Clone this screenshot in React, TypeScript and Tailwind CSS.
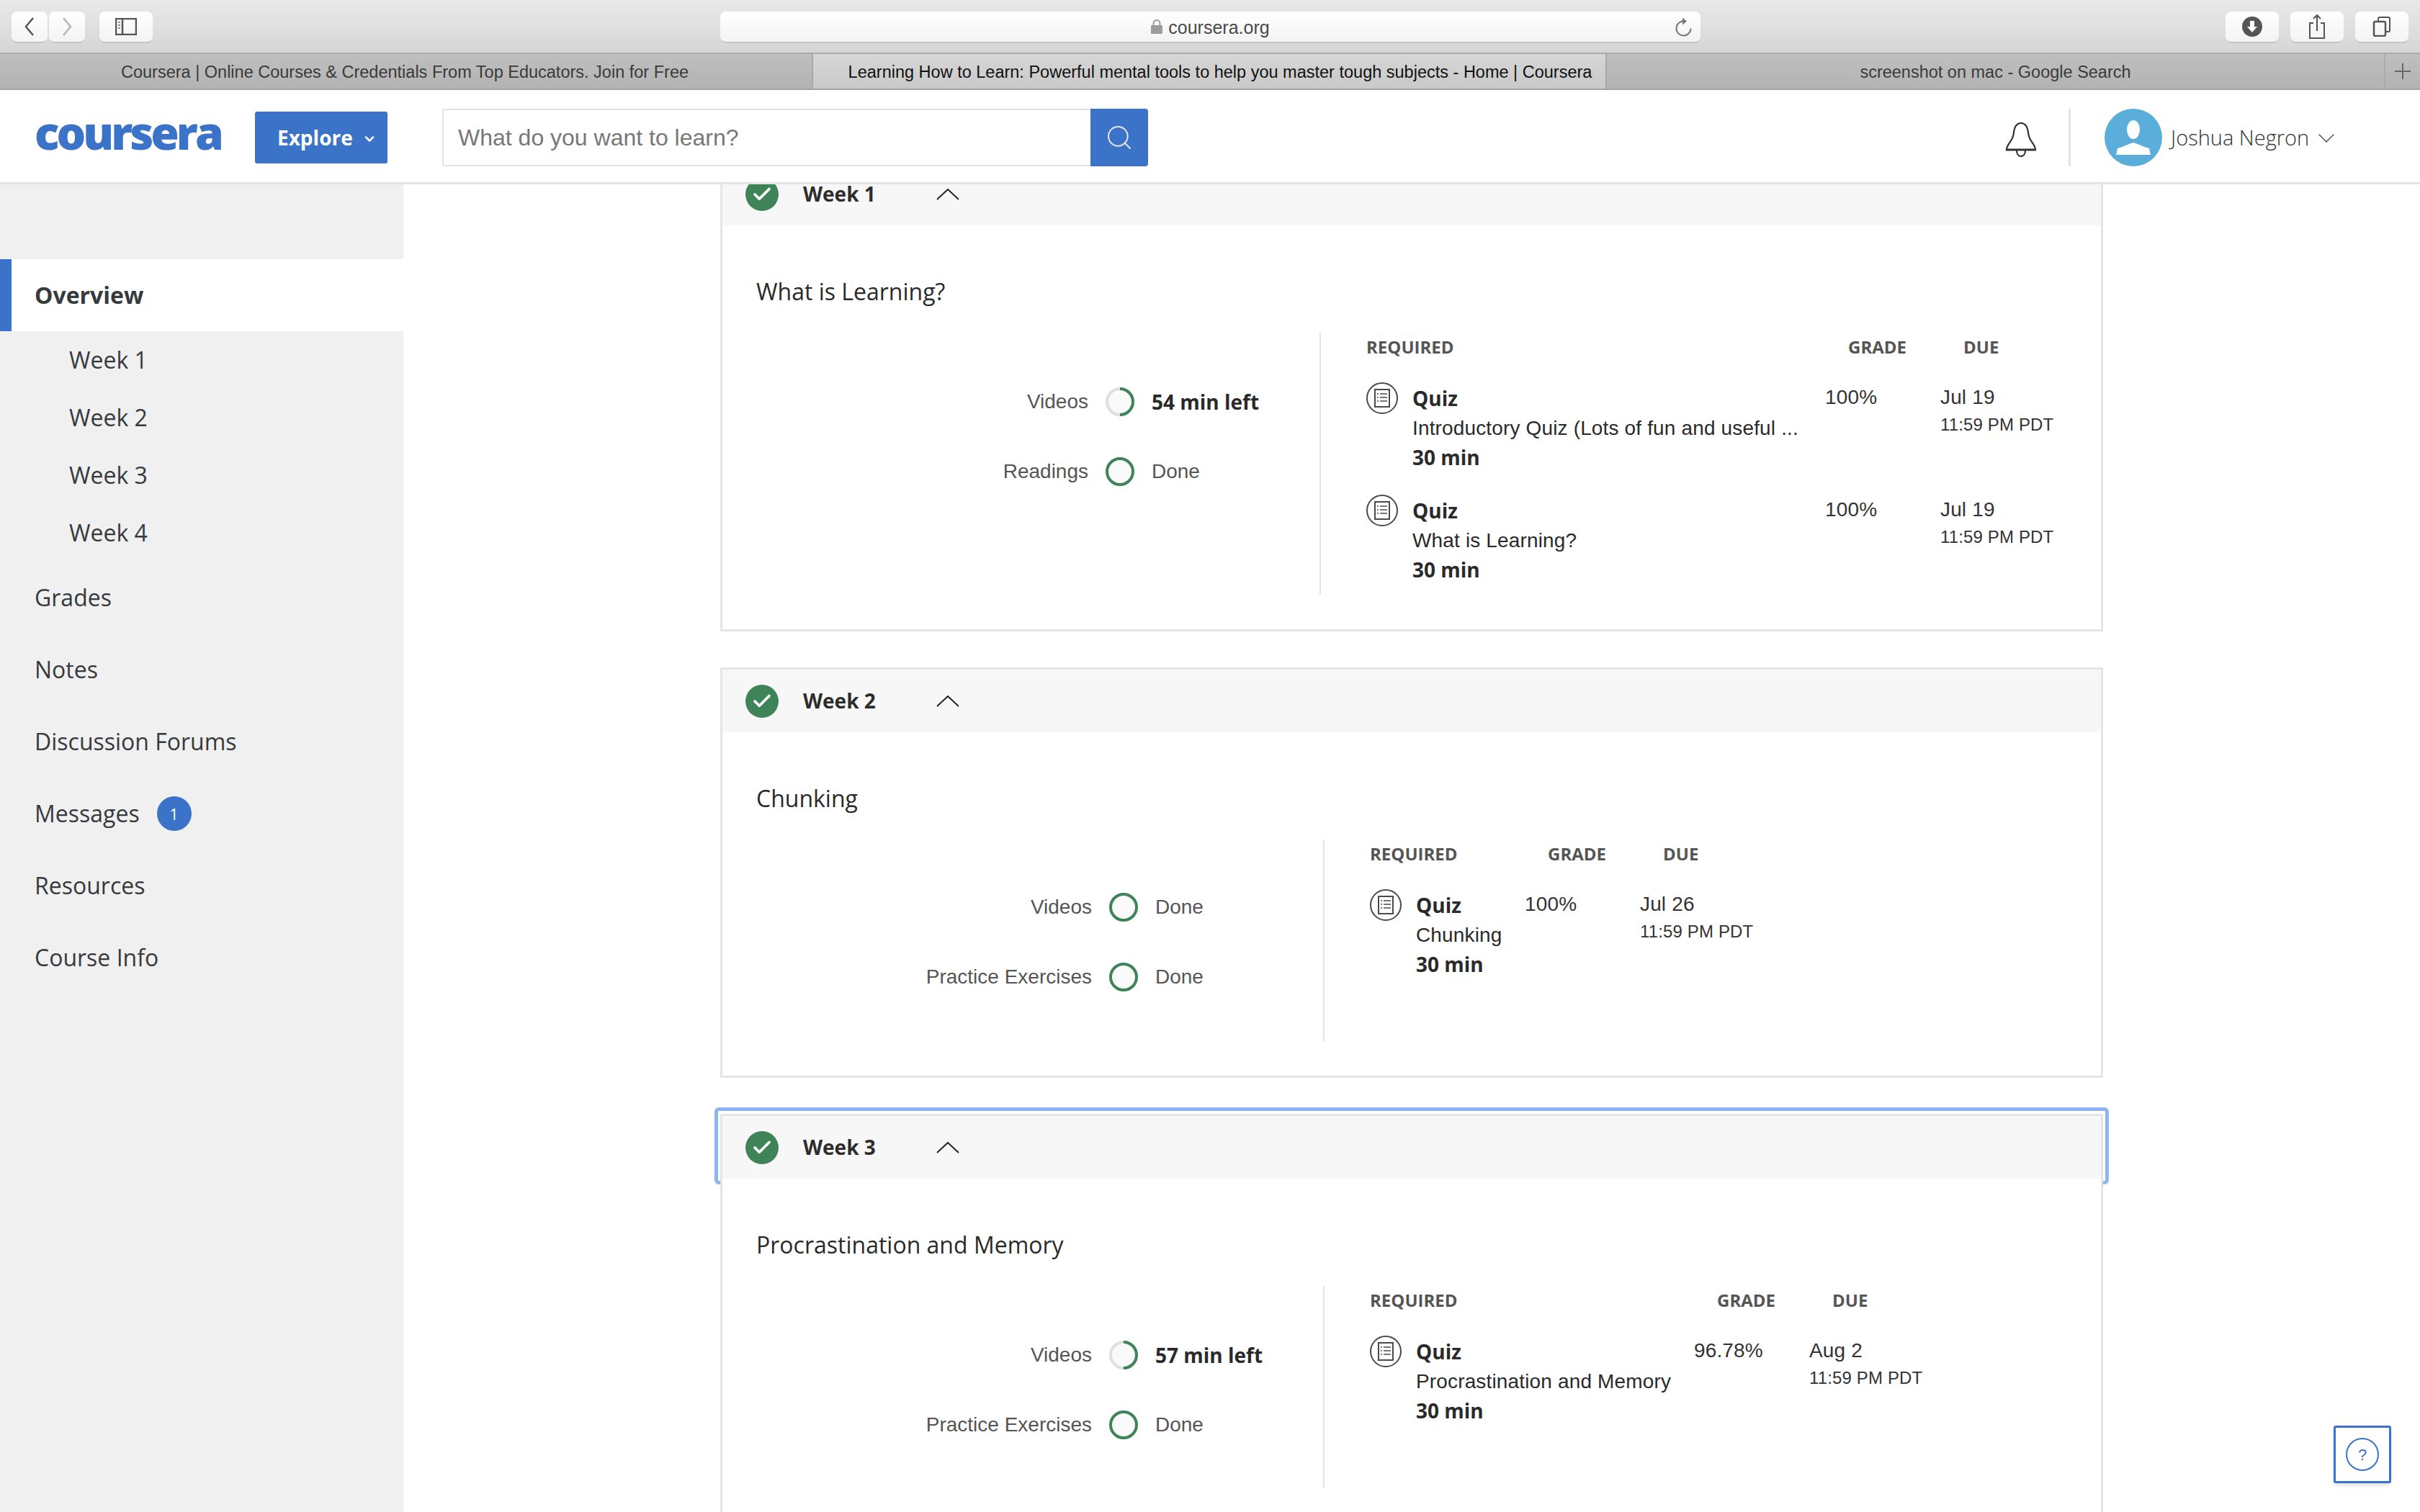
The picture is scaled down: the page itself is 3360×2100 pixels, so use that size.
import { Check, ChevronDown, Search } from 'lucide-react';

const openSans = 'font-["Open_Sans",sans-serif]';
const helvetica = 'font-["Liberation_Sans",Arial,sans-serif]';

type Quiz = { name: string; grade: string; date: string };
type Progress = { label: string; status: string; partial?: boolean };

const BrowserButton = ({ className, children }: { className: string; children: React.ReactNode }) => (
  <div className={`flex h-[44px] items-center justify-center rounded-[8px] border-b-2 border-[#c4c4c4] bg-gradient-to-b from-white to-[#f3f3f3] ${className}`}>
    {children}
  </div>
);

const BrowserBar = () => (
  <div className="flex h-[75px] items-start border-b-2 border-[#ababab] bg-gradient-to-b from-[#e9e9e9] to-[#d6d6d6] pt-[16px] pl-[16px] pr-[16px]">
    <BrowserButton className="w-[50px]">
      <svg width="16" height="26" viewBox="0 0 16 26" fill="none" stroke="#555" strokeWidth="2.5"><path d="M13 1 3 13l10 12" /></svg>
    </BrowserButton>
    <BrowserButton className="ml-[2px] w-[50px]">
      <svg width="16" height="26" viewBox="0 0 16 26" fill="none" stroke="#b5b5b5" strokeWidth="2.5"><path d="m3 1 10 12L3 25" /></svg>
    </BrowserButton>
    <BrowserButton className="ml-[20px] w-[74px]">
      <svg width="30" height="24" viewBox="0 0 30 24" fill="none" stroke="#555" strokeWidth="2.5">
        <rect x="1" y="1" width="28" height="22" />
        <path d="M10 1v22" />
        <path d="M4 6h3M4 10h3M4 14h3" strokeWidth="2" stroke="#888" />
      </svg>
    </BrowserButton>
    <BrowserButton className={`relative ml-[788px] w-[1361px] gap-[8px] pt-[2px] text-[25px] leading-none text-[#4a4a4a] ${helvetica}`}>
      <svg width="16" height="20" viewBox="0 0 16 20" className="mt-[-2px]">
        <path d="M3.5 9V5.5a4.5 4.5 0 0 1 9 0V9" fill="none" stroke="#9c9c9c" strokeWidth="2" />
        <rect y="8" width="16" height="12" rx="1" fill="#9c9c9c" />
      </svg>
      <span>coursera.org</span>
      <svg width="24" height="28" viewBox="0 0 24 28" fill="none" stroke="#777" strokeWidth="2" className="absolute right-[12px] top-[7px]">
        <path d="M14 6.5a10 10 0 1 0 8.5 10" />
        <path d="M11 1.5 17 6.5l-6 5z" fill="#777" stroke="none" />
      </svg>
    </BrowserButton>
    <BrowserButton className="ml-[729px] w-[74px]">
      <svg width="28" height="28" viewBox="0 0 28 28">
        <circle cx="14" cy="14" r="14" fill="#555" />
        <path d="M11 6h6v8h4l-7 8-7-8h4z" fill="#fff" />
      </svg>
    </BrowserButton>
    <BrowserButton className="ml-[16px] w-[74px]">
      <svg width="24" height="34" viewBox="0 0 24 34" fill="none" stroke="#555" strokeWidth="2">
        <path d="M7 12H2v21h20V12h-5" />
        <path d="M12 23V1M7 6l5-5 5 5" />
      </svg>
    </BrowserButton>
    <BrowserButton className="ml-[16px] w-[74px]">
      <svg width="26" height="28" viewBox="0 0 26 28" fill="none" stroke="#555" strokeWidth="2.5">
        <rect x="2" y="7" width="16" height="20" rx="2" />
        <path d="M8 7V3a2 2 0 0 1 2-2h12a2 2 0 0 1 2 2v16a2 2 0 0 1-2 2h-4" strokeWidth="2" />
      </svg>
    </BrowserButton>
  </div>
);

const TabBar = () => (
  <div className={`flex h-[50px] border-b-2 border-[#a3a3a3] bg-gradient-to-b from-[#bfbfbf] to-[#b3b3b3] text-[23.5px] ${helvetica}`}>
    <div className="flex w-[1127px] items-center justify-center pt-[4px] pr-[3px] text-[#3a3a3a]">
      Coursera | Online Courses &amp; Credentials From Top Educators. Join for Free
    </div>
    <div className="flex w-[1104px] items-center justify-center border-x-2 border-[#a8a8a8] bg-gradient-to-b from-[#d6d6d6] to-[#c9c9c9] pt-[4px] pl-[30px] text-[#111]">
      Learning How to Learn: Powerful mental tools to help you master tough subjects - Home | Coursera
    </div>
    <div className="flex w-[1079px] items-center justify-center pt-[4px] text-[#3a3a3a]">screenshot on mac - Google Search</div>
    <div className="flex w-[50px] items-center justify-center border-l-2 border-[#ababab]">
      <svg width="24" height="24" viewBox="0 0 24 24" stroke="#666" strokeWidth="2"><path d="M12 1v22M1 12h22" /></svg>
    </div>
  </div>
);

const SiteHeader = () => (
  <header className="flex h-[131px] shrink-0 items-center border-b-[3px] border-[#e4e4e4] bg-white pt-[4px]">
    <div className={`ml-[48px] mt-[-14px] w-[258px] text-[64px] leading-none font-extrabold tracking-[-4px] text-[#3a73c7] ${openSans}`}>coursera</div>
    <button className={`ml-[48px] flex h-[72px] w-[184px] items-center rounded-[3px] bg-[#3a73c7] pl-[31px] text-[28px] font-bold text-white ${openSans}`}>
      Explore
      <ChevronDown size={20} strokeWidth={3} className="ml-[13px] mt-[3px]" />
    </button>
    <div className="ml-[76px] flex h-[80px]">
      <div className={`flex w-[900px] items-center rounded-l-[3px] border-2 border-r-0 border-[#e2e2e2] pl-[20px] text-[32px] text-[#777] ${helvetica}`}>
        What do you want to learn?
      </div>
      <div className="flex w-[80px] items-center justify-center rounded-r-[4px] bg-[#3a73c7]">
        <Search size={40} strokeWidth={1.2} color="#e6e6e6" />
      </div>
    </div>
    <svg width="44" height="48" viewBox="0 0 44 48" fill="none" stroke="#333" strokeWidth="2.2" className="ml-[1190px] mt-[6px]">
      <path d="M2 38c0-7 7-11 9-19 1-3 1-7 2-10 1-5 5-8 9-8s8 3 9 8c1 3 1 7 2 10 2 8 9 12 9 19z" />
      <path d="M1 38h42" strokeWidth="3" />
      <path d="M16 39c0 4 2 8 6 8s6-4 6-8" />
    </svg>
    <div className="ml-[44px] h-[80px] w-[3px] bg-[#e4e4e4]" />
    <svg width="80" height="80" viewBox="0 0 80 80" className="ml-[47px]">
      <circle cx="40" cy="40" r="40" fill="#5badda" />
      <ellipse cx="40" cy="29" rx="9" ry="13" fill="#fff" />
      <path d="M16 64l2-9c8-2 15-6 22-8 7 2 14 6 22 8l2 9z" fill="#fff" />
    </svg>
    <span className={`ml-[12px] text-[29px] font-light text-[#333] ${openSans}`}>Joshua Negron</span>
    <ChevronDown size={40} strokeWidth={0.8} color="#444" className="ml-[4px] mt-[2px]" />
  </header>
);

const SideLink = ({ label, sub, badge }: { label: string; sub?: boolean; badge?: boolean }) => (
  <div className={`flex items-center text-[32px] text-[#373a3c] ${sub ? 'h-[80px] pl-[96px]' : 'h-[100px] pl-[48px]'}`}>
    {label}
    {badge && (
      <span className="ml-[24px] flex h-[48px] w-[48px] items-center justify-center rounded-full bg-[#3a73c7] text-[22px] text-white">1</span>
    )}
  </div>
);

const Sidebar = () => (
  <aside className={`w-[560px] shrink-0 bg-[#f0f0f0] pt-[104px] ${openSans}`}>
    <div className="flex h-[100px] items-center border-l-[16px] border-[#3a73c7] bg-white pl-[32px] text-[32px] font-bold text-[#373a3c]">Overview</div>
    <SideLink sub label="Week 1" />
    <SideLink sub label="Week 2" />
    <SideLink sub label="Week 3" />
    <SideLink sub label="Week 4" />
    <SideLink label="Grades" />
    <SideLink label="Notes" />
    <SideLink label="Discussion Forums" />
    <SideLink badge label="Messages" />
    <SideLink label="Resources" />
    <SideLink label="Course Info" />
  </aside>
);

const ProgressRing = ({ partial }: { partial?: boolean }) => (
  <svg width="40" height="40" viewBox="0 0 40 40" fill="#fafafa" className="shrink-0">
    <circle cx="20" cy="20" r="18" stroke={partial ? '#dfe1e1' : '#3f8359'} strokeWidth="4" />
    {partial && <path d="M20 2a18 18 0 0 1 0 36" fill="none" stroke="#3f8359" strokeWidth="4" />}
  </svg>
);

const QuizIcon = () => (
  <svg width="44" height="44" viewBox="0 0 44 44" fill="none" stroke="#4a4a4a" className="shrink-0">
    <circle cx="22" cy="22" r="21" strokeWidth="2" />
    <rect x="12" y="10" width="20" height="24" strokeWidth="2" />
    <path d="M15 16h2M19 16h10M15 21h2M19 21h10M15 26h2M19 26h10" strokeWidth="2" stroke="#777" />
  </svg>
);

const QuizRow = ({ quiz, nameWidth }: { quiz: Quiz; nameWidth: string }) => (
  <div className={`flex h-[156px] text-[28px] leading-[41px] tracking-[0.15px] text-[#2a2a2a] ${helvetica}`}>
    <div className={`flex gap-[20px] ${nameWidth}`}>
      <QuizIcon />
      <div className="mt-[2px]">
        <div className={`font-bold tracking-normal ${openSans}`}>Quiz</div>
        <div className="whitespace-nowrap">{quiz.name}</div>
        <div className={`font-bold tracking-normal ${openSans}`}>30 min</div>
      </div>
    </div>
    <div className="w-[160px] text-[#333]">{quiz.grade}</div>
    <div className="text-[#333]">
      <div>{quiz.date}</div>
      <div className="mt-[-3px] text-[24px] leading-[41px] whitespace-nowrap">11:59 PM PDT</div>
    </div>
  </div>
);

const WeekCard = ({ week, title, rows, quizzes, nameWidth, leftWidth, labelWidth, height }: {
  week: string;
  title: string;
  rows: Progress[];
  quizzes: Quiz[];
  nameWidth: string;
  leftWidth: string;
  labelWidth: string;
  height: string;
}) => (
  <section className={`relative shrink-0 border-[3px] border-[#e5e5e5] bg-white ${height}`}>
    <div className="flex h-[87px] items-center bg-[#f7f7f7] pl-[32px]">
      <span className="flex h-[46px] w-[46px] items-center justify-center rounded-full bg-[#3f8359]">
        <Check size={30} strokeWidth={3} color="#fff" />
      </span>
      <span className={`ml-[34px] mt-[-2px] text-[28px] leading-[36px] font-bold text-[#2d2d2d] ${openSans}`}>{week}</span>
      <svg width="32" height="16" viewBox="0 0 32 16" fill="none" stroke="#222" strokeWidth="2" className="ml-[84px]">
        <path d="M1 15 16 1l15 14" />
      </svg>
    </div>
    <h3 className={`mt-[68px] ml-[47px] text-[32px] leading-[48px] text-[#2a2a2a] ${openSans}`}>{title}</h3>
    <div className="mt-[33px] ml-[47px] flex">
      <div className={`${leftWidth} flex flex-col gap-[57px] border-r-2 border-[#e4e4e4] ${helvetica} text-[28px] text-[#555]`}>
        {rows.map((row) => (
          <div key={row.label} className="flex h-[40px] items-center">
            <span className={`${labelWidth} text-right`}>{row.label}</span>
            <span className="mx-[24px]"><ProgressRing partial={row.partial} /></span>
            <span className={row.partial ? `font-bold text-[#2a2a2a] ${openSans}` : ''}>{row.status}</span>
          </div>
        ))}
      </div>
      <div className="pl-[63px]">
        <div className={`flex h-[69px] items-start pt-[2px] text-[24px] leading-[36px] font-bold text-[#555] ${openSans}`}>
          <span className={nameWidth}>REQUIRED</span>
          <span className="w-[160px] pl-[32px]">GRADE</span>
          <span className="pl-[32px]">DUE</span>
        </div>
        {quizzes.map((quiz, i) => (
          <QuizRow key={i} quiz={quiz} nameWidth={nameWidth} />
        ))}
      </div>
    </div>
  </section>
);

export default function App() {
  return (
    <div className="relative flex h-[2100px] w-[3360px] flex-col overflow-hidden bg-white">
      <BrowserBar />
      <TabBar />
      <SiteHeader />
      <div className="flex min-h-0 flex-1">
        <Sidebar />
        <div className="min-w-0 flex-1 overflow-hidden">
          {/* page is scrolled a little, week 1 slides under the header */}
          <main className="mt-[-33px] ml-[440px] flex w-[1920px] flex-col gap-[50px]">
            <WeekCard
              week="Week 1"
              title="What is Learning?"
              height="h-[654px]"
              leftWidth="w-[784px] h-[364px] pt-[76px]"
              labelWidth="w-[461px]"
              nameWidth="w-[637px]"
              rows={[
                { label: 'Videos', status: '54 min left', partial: true },
                { label: 'Readings', status: 'Done' },
              ]}
              quizzes={[
                { name: 'Introductory Quiz (Lots of fun and useful ...', grade: '100%', date: 'Jul 19' },
                { name: 'What is Learning?', grade: '100%', date: 'Jul 19' },
              ]}
            />
            <WeekCard
              week="Week 2"
              title="Chunking"
              height="h-[570px]"
              leftWidth="w-[789px] h-[280px] pt-[74px]"
              labelWidth="w-[466px]"
              nameWidth="w-[215px]"
              rows={[
                { label: 'Videos', status: 'Done' },
                { label: 'Practice Exercises', status: 'Done' },
              ]}
              quizzes={[{ name: 'Chunking', grade: '100%', date: 'Jul 26' }]}
            />
            <div className="relative shrink-0">
              <div className="absolute -left-[8px] -right-[8px] -top-[9px] h-[107px] rounded-[6px] border-[5px] border-[#8eb4f4]" />
              <WeekCard
                week="Week 3"
                title="Procrastination and Memory"
                height="h-[600px]"
                leftWidth="w-[789px] h-[280px] pt-[76px]"
                labelWidth="w-[466px]"
                nameWidth="w-[450px]"
                rows={[
                  { label: 'Videos', status: '57 min left', partial: true },
                  { label: 'Practice Exercises', status: 'Done' },
                ]}
                quizzes={[{ name: 'Procrastination and Memory', grade: '96.78%', date: 'Aug 2' }]}
              />
            </div>
          </main>
        </div>
      </div>
      <div className="absolute right-[40px] bottom-[40px] flex h-[80px] w-[80px] items-center justify-center rounded-[3px] border-[3px] border-[#3a73c7] bg-white shadow-md">
        <span className={`flex h-[46px] w-[46px] items-center justify-center rounded-full border-2 border-[#3a73c7] text-[22px] text-[#3a73c7] ${helvetica}`}>?</span>
      </div>
    </div>
  );
}
